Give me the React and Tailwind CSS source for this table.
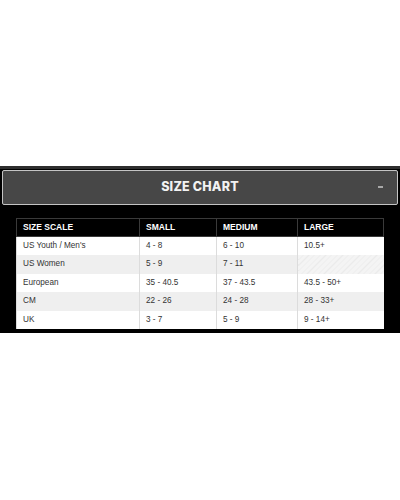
const rows = [
  ["US Youth / Men's", "4 - 8", "6 - 10", "10.5+"],
  ["US Women", "5 - 9", "7 - 11", null],
  ["European", "35 - 40.5", "37 - 43.5", "43.5 - 50+"],
  ["CM", "22 - 26", "24 - 28", "28 - 33+"],
  ["UK", "3 - 7", "5 - 9", "9 - 14+"],
];

const headers = ["SIZE SCALE", "SMALL", "MEDIUM", "LARGE"];

export default function App() {
  return (
    <div className="w-[400px] h-[500px] bg-white font-['Liberation_Sans',Arial,sans-serif]">
      <div className="h-[166px]" />
      <div className="bg-black h-[167px] flex flex-col">
        <div className="h-[3px] bg-[#2e2e2e]" />
        <div className="mx-[2px] mt-[1px] h-[35px] rounded-[2px] border border-[#c4c4c4] bg-[#474747] relative flex items-center justify-center">
          <span className="font-['Inter',sans-serif] font-extrabold text-[12.5px] tracking-[0.2px] text-[#f2f2f2]">
            SIZE CHART
          </span>
          <span className="absolute right-[14px] top-[15px] w-[5px] h-[2px] bg-[#a8a8a8]" />
        </div>
        <div className="mt-[13px] ml-[16px] w-[367px]">
          <table className="table-fixed w-[367px] border-collapse">
            <colgroup>
              <col className="w-[123px]" />
              <col className="w-[77px]" />
              <col className="w-[81px]" />
              <col className="w-[86px]" />
            </colgroup>
            <thead>
              <tr className="h-[18px] bg-black">
                {headers.map((h) => (
                  <th
                    key={h}
                    className="border border-[#3a3a3a] px-[6px] text-left text-[8.5px] font-bold text-white leading-none"
                  >
                    {h}
                  </th>
                ))}
              </tr>
            </thead>
            <tbody>
              {rows.map((r, i) => (
                <tr key={r[0]} className={i % 2 === 1 ? "h-[18.5px] bg-[#efefef]" : "h-[18.5px] bg-white"}>
                  {r.map((c, j) =>
                    c === null ? (
                      <td
                        key={j}
                        className="border-l border-[#dcdcdc] bg-[repeating-linear-gradient(135deg,#f4f4f4_0px,#f4f4f4_3px,#ebebeb_3px,#ebebeb_4px)]"
                      />
                    ) : (
                      <td
                        key={j}
                        className="border-l border-[#dcdcdc] px-[6px] text-[8.2px] text-[#333] leading-none"
                      >
                        {c}
                      </td>
                    )
                  )}
                </tr>
              ))}
            </tbody>
          </table>
        </div>
      </div>
    </div>
  );
}
